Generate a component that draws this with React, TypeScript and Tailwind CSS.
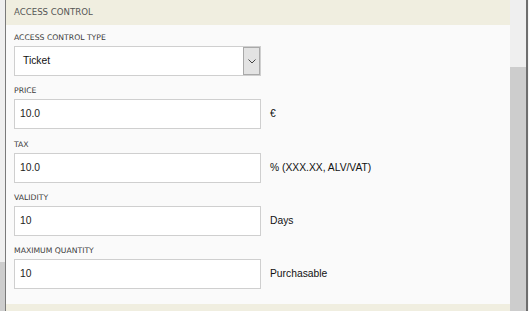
const label = "block text-[7.7px] leading-[10px] text-[#3a3a3a] uppercase";
const labelFont = { fontFamily: '"DejaVu Sans", Verdana, sans-serif' };

function Field({ name, value, unit, extra = "" }: { name: string; value: string; unit: string; extra?: string }) {
  return (
    <div className={"flex flex-col " + extra}>
      <span className={label} style={labelFont}>
        {name}
      </span>
      <div className="mt-[3px] flex items-center">
        <div className="flex h-[30px] w-[247px] items-center border border-[#cfcfcf] bg-white pl-[5px] text-[10.3px] text-[#222]">
          {value}
        </div>
        <span className="ml-[9px] text-[10.3px] text-[#111]">{unit}</span>
      </div>
    </div>
  );
}

export default function App() {
  return (
    <div
      className="flex h-[311px] w-[529px] overflow-hidden bg-[#f7f7f7]"
      style={{ fontFamily: '"Liberation Sans", Arial, sans-serif' }}
    >
      <div className="flex w-[5px] flex-col bg-[#efefef]">
        <div className="h-[262px]" />
        <div className="flex-1 bg-[#cdcdcd]" />
      </div>
      <div className="w-px bg-[#7a7a7a]" />
      <div className="flex flex-1 flex-col bg-[#fafafa]">
        <div className="flex h-[25px] items-center bg-[#f0eee0] pl-[8px]">
          <span className="text-[8.6px] text-[#555]" style={labelFont}>
            ACCESS CONTROL
          </span>
        </div>
        <div className="flex flex-1 flex-col gap-[10px] pl-[8px] pt-[8px]">
          <div className="flex flex-col">
            <span className={label} style={labelFont}>
              Access control type
            </span>
            <div className="mt-[3px] flex h-[30px] w-[247px] items-center justify-between border border-[#cfcfcf] bg-white">
              <span className="pl-[8px] text-[10.3px] text-[#111]">Ticket</span>
              <div className="flex h-full w-[17px] items-center justify-center border border-[#a9a9a9] bg-[#e3e3e3]">
                <svg width="8" height="5" viewBox="0 0 8 5" fill="none">
                  <path d="M0.5 0.5 L4 4 L7.5 0.5" stroke="#444" strokeWidth="1" />
                </svg>
              </div>
            </div>
          </div>
          <Field name="Price" value="10.0" unit="€" />
          <Field name="Tax" value="10.0" unit="% (XXX.XX, ALV/VAT)" extra="mt-px" />
          <Field name="Validity" value="10" unit="Days" />
          <Field name="Maximum quantity" value="10" unit="Purchasable" />
        </div>
        <div className="h-[7px] bg-[#f0eee0]" />
      </div>
      <div className="flex w-[16px] flex-col bg-[#efefef]">
        <div className="h-[67px]" />
        <div className="flex-1 bg-[#cdcdcd]" />
      </div>
      <div className="w-[2px] bg-[#6e6e6e]" />
      <div className="w-px bg-[#f7f7f7]" />
    </div>
  );
}
